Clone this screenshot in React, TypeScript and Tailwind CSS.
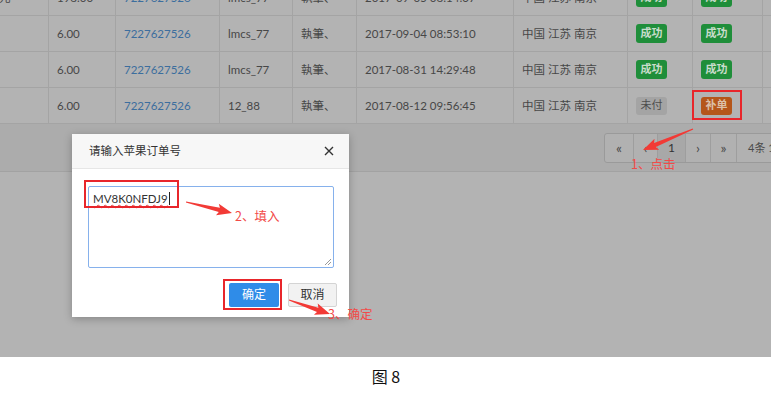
import React from 'react';

type Row = {
  first: string;
  amount: string;
  order: string;
  user: string;
  item: string;
  time: string;
  area: string;
  pay: 'ok' | 'unpaid';
  ship: 'ok' | 'fix';
};

const rows: Row[] = [
  { first: '元', amount: '198.00', order: '7227627526', user: 'lmcs_77', item: '執筆、', time: '2017-09-05 08:14:37', area: '中国 江苏 南京', pay: 'ok', ship: 'ok' },
  { first: '', amount: '6.00', order: '7227627526', user: 'lmcs_77', item: '執筆、', time: '2017-09-04 08:53:10', area: '中国 江苏 南京', pay: 'ok', ship: 'ok' },
  { first: '', amount: '6.00', order: '7227627526', user: 'lmcs_77', item: '執筆、', time: '2017-08-31 14:29:48', area: '中国 江苏 南京', pay: 'ok', ship: 'ok' },
  { first: '', amount: '6.00', order: '7227627526', user: '12_88', item: '執筆、', time: '2017-08-12 09:56:45', area: '中国 江苏 南京', pay: 'unpaid', ship: 'fix' },
];

const Badge: React.FC<{ kind: 'ok' | 'unpaid' | 'fix' }> = ({ kind }) => {
  if (kind === 'unpaid') {
    return <span className="inline-flex h-[18px] w-[31px] items-center justify-center rounded-[3px] bg-[#a4a4a4] text-[11px] text-[#4d4d4d]">未付</span>;
  }
  if (kind === 'fix') {
    return <span className="inline-flex h-[18px] w-[31px] items-center justify-center rounded-[3px] bg-[#b5561a] text-[11px] font-bold text-[#dcc0a8]">补单</span>;
  }
  return <span className="inline-flex h-[19px] w-[31px] items-center justify-center rounded-[3px] bg-[#1f8e3a] text-[11px] font-bold text-[#c8dccb]">成功</span>;
};

const Cell: React.FC<{ w: string; children?: React.ReactNode; first?: boolean }> = ({ w, children, first }) => (
  <div className={`${w} flex h-full shrink-0 items-center overflow-hidden whitespace-nowrap ${first ? '' : 'border-l border-[#a4a4a4] pl-2'}`}>
    {children}
  </div>
);

type Pt = [number, number];

function arrowPoints(tail: Pt, tip: Pt) {
  const dx = tip[0] - tail[0];
  const dy = tip[1] - tail[1];
  const len = Math.hypot(dx, dy);
  const ux = dx / len;
  const uy = dy / len;
  const nx = -uy;
  const ny = ux;
  const head = 13;
  const bx = tip[0] - ux * head;
  const by = tip[1] - uy * head;
  const p = (x: number, y: number) => `${x.toFixed(1)},${y.toFixed(1)}`;
  return [
    p(tail[0] + nx * 0.4, tail[1] + ny * 0.4),
    p(bx + nx * 2.2, by + ny * 2.2),
    p(bx - ux * 2 + nx * 6, by - uy * 2 + ny * 6),
    p(tip[0], tip[1]),
    p(bx - ux * 2 - nx * 6, by - uy * 2 - ny * 6),
    p(bx - nx * 2.2, by - ny * 2.2),
    p(tail[0] - nx * 0.4, tail[1] - ny * 0.4),
  ].join(' ');
}

export default function App() {
  const font = { fontFamily: 'Lato, "Noto Sans CJK SC", sans-serif' };
  const cjk = { fontFamily: '"Noto Sans CJK SC", sans-serif' };

  return (
    <div className="relative h-[395px] w-[771px] overflow-hidden bg-white" style={font}>
      <div className="relative h-[357px] overflow-hidden bg-[#b3b3b3]">
        {/* table */}
        <div className="-mt-[20px] text-[11.5px] text-[#474747]">
          {rows.map((r, i) => (
            <div key={i} className="flex h-[36px] border-b border-[#a4a4a4]">
              <Cell w="w-[48px]" first>
                <span className="-ml-[1px]">{r.first}</span>
              </Cell>
              <Cell w="w-[67px]">{r.amount}</Cell>
              <Cell w="w-[104px]">
                <span className="text-[#3c6e9e]">{r.order}</span>
              </Cell>
              <Cell w="w-[73px]">{r.user}</Cell>
              <Cell w="w-[64px]">{r.item}</Cell>
              <Cell w="w-[157px]">{r.time}</Cell>
              <Cell w="w-[114px]">{r.area}</Cell>
              <Cell w="w-[65px]">
                <Badge kind={r.pay} />
              </Cell>
              <Cell w="w-[70px]">
                <Badge kind={r.ship} />
              </Cell>
              <Cell w="w-[20px]" />
            </div>
          ))}
        </div>

        {/* pagination strip */}
        <div className="flex h-[48px] justify-end border-b border-[#a2a2a2] bg-[#acacac] pt-[9px]">
          <div className="-mr-[30px] flex h-[30px] overflow-hidden rounded-[3px] border border-[#9a9a9a] bg-[#b1b1b1] text-[14px] text-[#4a4a4a]">
            <div className="flex w-[28px] items-center justify-center pb-[2px]">«</div>
            <div className="flex w-[24px] items-center justify-center border-l border-[#9e9e9e] pb-[2px]">‹</div>
            <div className="flex w-[28px] items-center justify-center border-l border-[#9e9e9e] bg-[#a8a8a8] text-[12px] text-[#333]">1</div>
            <div className="flex w-[25px] items-center justify-center border-l border-[#9e9e9e] pb-[2px]">›</div>
            <div className="flex w-[26px] items-center justify-center border-l border-[#9e9e9e] pb-[2px]">»</div>
            <div className="flex w-[64px] items-center whitespace-nowrap border-l border-[#9e9e9e] pl-[11px] text-[11px]">4条 1/1页</div>
          </div>
        </div>

        {/* modal */}
        <div className="absolute left-[72px] top-[134px] flex h-[183px] w-[277px] flex-col bg-white shadow-[0_2px_8px_rgba(0,0,0,0.25)]">
          <div className="flex h-[35px] items-center justify-between border-b border-[#e6e6e6] bg-[#f7f7f7] pl-[17px] pr-[15px]">
            <span className="text-[11.5px] text-[#333]">请输入苹果订单号</span>
            <svg width="10" height="10" viewBox="0 0 10 10">
              <path d="M1 1 L9 9 M9 1 L1 9" stroke="#333" strokeWidth="1.4" />
            </svg>
          </div>
          <div className="relative mx-[16px] mt-[17px] h-[82px] w-[246px] rounded-[2px] border border-[#86b1ec] px-[4px] pt-[3px] text-[11.5px] leading-[16px] text-[#333]">
            <span className="underline decoration-[#e04848] decoration-wavy decoration-1 underline-offset-[1px]">MV8K0NFDJ9</span>
            <span className="ml-[1px] inline-block h-[13px] w-px translate-y-[2px] bg-[#222]" />
            <svg className="absolute bottom-[1px] right-[1px]" width="8" height="8" viewBox="0 0 8 8">
              <path d="M7 1 L1 7 M7 4 L4 7" stroke="#999" strokeWidth="1" />
            </svg>
          </div>
          <div className="mt-[15px] flex justify-end gap-[9px] pr-[12px] text-[12px]">
            <div className="flex h-[24px] w-[50px] items-center justify-center rounded-[2px] bg-[#2f8ce8] text-white">确定</div>
            <div className="flex h-[24px] w-[49px] items-center justify-center rounded-[2px] border border-[#d4d4d4] bg-[#f2f2f2] text-[#333]">取消</div>
          </div>
        </div>

        {/* annotation boxes */}
        <div className="absolute left-[84px] top-[180px] h-[28px] w-[95px] border-2 border-[#e8262b]" />
        <div className="absolute left-[223px] top-[279px] h-[31px] w-[59px] border-2 border-[#e8262b]" />
        <div className="absolute left-[692px] top-[90px] h-[30px] w-[50px] border-2 border-[#e8262b]" />
      </div>

      {/* annotation arrows and labels */}
      <svg className="pointer-events-none absolute left-0 top-0" width="771" height="395">
        <polygon points={arrowPoints([693, 129], [643, 150])} fill="#f23a36" />
        <polygon points={arrowPoints([186, 202], [232, 213])} fill="#f23a36" />
        <polygon points={arrowPoints([289, 300], [330, 314])} fill="#f23a36" />
      </svg>
      <div className="absolute left-[631px] top-[156px] text-[12.5px] leading-[16px] text-[#f24a48]" style={cjk}>1、点击</div>
      <div className="absolute left-[235px] top-[208px] text-[12.5px] leading-[16px] text-[#f24a48]" style={cjk}>2、填入</div>
      <div className="absolute left-[328px] top-[306px] text-[12.5px] leading-[16px] text-[#f24a48]" style={cjk}>3、确定</div>

      {/* caption */}
      <div className="flex h-[38px] items-center justify-center pl-[1px] text-[16px] text-[#111]" style={cjk}>
        图 8
      </div>
    </div>
  );
}
